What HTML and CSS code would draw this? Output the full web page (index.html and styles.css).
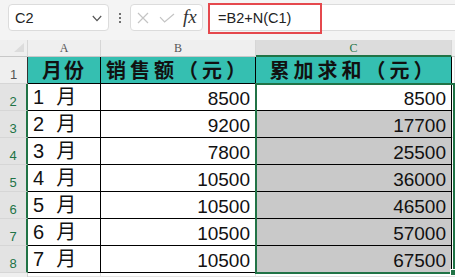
FILE: index.html
```html
<!DOCTYPE html>
<html>
<head>
<meta charset="utf-8">
<link rel="stylesheet" href="styles.css">
</head>
<body>
<div class="app">
  <div class="toolbar">
    <div class="namebox">
      <span class="ref">C2</span>
      <svg class="chev" width="10" height="7" viewBox="0 0 10 7"><path d="M0.8 1 L5 5.6 L9.2 1" fill="none" stroke="#555" stroke-width="1.2"/></svg>
    </div>
    <div class="dots"><i></i><i></i><i></i></div>
    <div class="fbtns">
      <svg class="ico-x" width="12" height="12" viewBox="0 0 12 12"><path d="M1 1 L11 11 M11 1 L1 11" fill="none" stroke="#c4c4c4" stroke-width="1.2"/></svg>
      <svg class="ico-ok" width="16" height="10" viewBox="0 0 16 10"><path d="M1 4.2 L5.6 9 L15 1" fill="none" stroke="#c4c4c4" stroke-width="1.2"/></svg>
      <span class="fx">fx</span>
    </div>
    <div class="formula">
      <span class="ftext">=B2+N(C1)</span>
      <span class="mark"></span>
    </div>
  </div>
  <div class="sheet">
    <div class="corner"><svg width="10" height="9" viewBox="0 0 10 9"><path d="M10 0 L10 9 L0 9 Z" fill="#dcdcdc"/></svg></div>
    <div class="ch">A</div>
    <div class="ch">B</div>
    <div class="ch on">C</div>
    <div class="ch last"></div>

    <div class="rh first">1</div>
    <div class="c h ha">月份</div>
    <div class="c h hb">销售额（元）</div>
    <div class="c h hb">累加求和（元）</div>
    <div class="e"></div>

    <div class="rh on">2</div>
    <div class="c m">1<span class="mo">月</span></div>
    <div class="c num">8500</div>
    <div class="c num">8500</div>
    <div class="e"></div>

    <div class="rh on">3</div>
    <div class="c m">2<span class="mo">月</span></div>
    <div class="c num">9200</div>
    <div class="c num g">17700</div>
    <div class="e"></div>

    <div class="rh on">4</div>
    <div class="c m">3<span class="mo">月</span></div>
    <div class="c num">7800</div>
    <div class="c num g">25500</div>
    <div class="e"></div>

    <div class="rh on">5</div>
    <div class="c m">4<span class="mo">月</span></div>
    <div class="c num">10500</div>
    <div class="c num g">36000</div>
    <div class="e"></div>

    <div class="rh on">6</div>
    <div class="c m">5<span class="mo">月</span></div>
    <div class="c num">10500</div>
    <div class="c num g">46500</div>
    <div class="e"></div>

    <div class="rh on">7</div>
    <div class="c m">6<span class="mo">月</span></div>
    <div class="c num">10500</div>
    <div class="c num g">57000</div>
    <div class="e"></div>

    <div class="rh on">8</div>
    <div class="c m">7<span class="mo">月</span></div>
    <div class="c num">10500</div>
    <div class="c num g">67500</div>
    <div class="e"></div>

    <div class="rh tail"></div>
    <div class="e"></div>
    <div class="e"></div>
    <div class="e"></div>
    <div class="e"></div>

    <div class="sel"><span class="handle"></span></div>
  </div>
</div>
</body>
</html>
```

FILE: styles.css
```css
html, body {
  margin: 0;
  padding: 0;
}
body {
  width: 455px;
  height: 277px;
  overflow: hidden;
  background: #fff;
  font-family: "Liberation Sans", "Noto Sans CJK SC", sans-serif;
}
.app {
  display: flex;
  flex-direction: column;
  height: 277px;
}

/* toolbar */
.toolbar {
  height: 40px;
  flex: none;
  box-sizing: border-box;
  padding: 4px 0 0 8px;
  background: #f4f4f4;
  display: flex;
  align-items: flex-start;
}
.namebox {
  width: 101px;
  height: 27px;
  box-sizing: border-box;
  border: 1px solid #dcdcdc;
  border-radius: 4px;
  background: #fff;
  display: flex;
  align-items: center;
  justify-content: space-between;
  padding: 0 6px 0 6px;
}
.ref {
  font-size: 14.5px;
  color: #222;
}
.chev {
  display: block;
  margin-top: 1px;
}
.dots {
  width: 21px;
  height: 27px;
  display: flex;
  flex-direction: column;
  align-items: center;
  justify-content: center;
  gap: 2px;
}
.dots i {
  width: 2px;
  height: 2px;
  background: #444;
  border-radius: 1px;
}
.fbtns {
  width: 73px;
  height: 27px;
  box-sizing: border-box;
  border: 1px solid #dcdcdc;
  border-radius: 4px;
  background: #fff;
  display: flex;
  align-items: center;
  padding-left: 6px;
}
.ico-x { display: block; }
.ico-ok { display: block; margin-left: 10px; }
.fx {
  margin-left: 8px;
  font-family: "Liberation Serif", serif;
  font-style: italic;
  font-size: 19px;
  color: #333;
  line-height: 1;
  margin-top: -2px;
}
.formula {
  flex: 1;
  margin-left: 5px;
  height: 27px;
  box-sizing: border-box;
  border: 1px solid #dcdcdc;
  border-right: none;
  background: #fff;
  position: relative;
  display: flex;
  align-items: center;
  padding-left: 9px;
}
.ftext {
  font-size: 14.5px;
  color: #222;
}
.mark {
  position: absolute;
  left: -1px;
  top: -2px;
  width: 114px;
  height: 31px;
  box-sizing: border-box;
  border: 2px solid #e5484d;
}

/* sheet */
.sheet {
  flex: 1;
  display: grid;
  grid-template-columns: 28px 73px 155px 196px 1fr;
  grid-template-rows: 17px repeat(8, 27px) 1fr;
  position: relative;
}
.sheet > div {
  box-sizing: border-box;
  min-width: 0;
  overflow: hidden;
}
.corner {
  background: #efefef;
  border-right: 1px solid #d6d6d6;
  border-bottom: 1px solid #c8c8c8;
  display: flex;
  justify-content: flex-end;
  align-items: flex-end;
  padding: 0 3px 4px 0;
}
.corner svg { display: block; }
.ch {
  background: #efefef;
  border-right: 1px solid #d6d6d6;
  border-bottom: 1px solid #c8c8c8;
  font-family: "Liberation Serif", serif;
  font-size: 12px;
  color: #555;
  display: flex;
  justify-content: center;
  align-items: flex-end;
  line-height: 1;
  padding-bottom: 2px;
}
.ch.on {
  background: #dcdcdc;
  color: #217346;
  border-bottom: 2px solid #217346;
  padding-bottom: 1px;
}
.ch.last { border-right: none; }
.rh {
  background: #efefef;
  border-right: 1px solid #cfcfcf;
  border-bottom: 1px solid #d6d6d6;
  font-size: 13px;
  color: #555;
  display: flex;
  justify-content: center;
  align-items: flex-end;
  line-height: 1;
  padding-bottom: 2px;
}
.rh.first { border-right-color: #333; }
.rh.on {
  background: #e3e3e3;
  color: #217346;
  border-right: 2px solid #217346;
}
.rh.tail { border-bottom: none; }
.c {
  background: #fff;
  border-right: 1px solid #000;
  border-bottom: 1px solid #000;
  display: flex;
  align-items: flex-end;
  font-size: 19px;
  line-height: 1;
  color: #111;
  padding: 0 5px 2px 5px;
  white-space: pre;
}
.c.m {
  font-size: 20px;
  padding-bottom: 3px;
  padding-left: 5px;
}
.mo {
  margin-left: 12px;
}
.c.num { justify-content: flex-end; }
.c.g { background: #c9c9c9; }
.sheet > .c.h {
  background: #35bfb1;
  font-family: "Noto Sans CJK SC", sans-serif;
  font-weight: 700;
  font-size: 20px;
  line-height: 1.2;
  color: #111;
  justify-content: center;
  align-items: center;
  padding: 0;
  overflow: visible;
}
.c.ha { letter-spacing: 2px; }
.c.hb { letter-spacing: 4px; }
.e {
  background: #fff;
  border-right: 1px solid #e2e2e2;
  border-bottom: 1px solid #e2e2e2;
}
.sheet > .sel {
  position: absolute;
  grid-column: 4;
  grid-row: 3 / 10;
  top: -1px;
  left: -1px;
  right: 0;
  bottom: -1px;
  border: 2px solid #217346;
  z-index: 2;
  overflow: visible;
  pointer-events: none;
}
.handle {
  position: absolute;
  right: -4px;
  bottom: -4px;
  width: 5px;
  height: 5px;
  background: #217346;
  border: 1px solid #fff;
}
```
